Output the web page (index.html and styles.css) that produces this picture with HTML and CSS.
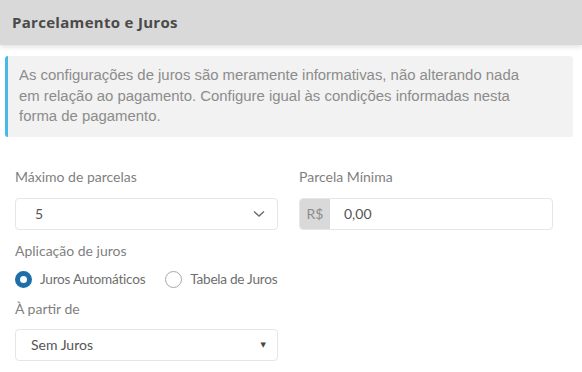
FILE: index.html
```html
<!DOCTYPE html>
<html lang="pt-BR">
<head>
<meta charset="utf-8">
<title>Parcelamento e Juros</title>
<link rel="stylesheet" href="styles.css">
</head>
<body>
<div class="panel-header">
  <h1 class="panel-title">Parcelamento e Juros</h1>
</div>
<div class="alert">
  As configurações de juros são meramente informativas, não alterando nada em relação ao pagamento. Configure igual às condições informadas nesta forma de pagamento.
</div>
<div class="form-grid">
  <div class="field">
    <label class="field-label">Máximo de parcelas</label>
    <div class="select">
      <span class="select-value select-value-indent">5</span>
      <svg class="chevron" width="12" height="8" viewBox="0 0 12 8"><polyline points="1,1.5 6,6 11,1.5" fill="none" stroke="#6b6b6b" stroke-width="1.4"/></svg>
    </div>
  </div>
  <div class="field">
    <label class="field-label">Parcela Mínima</label>
    <div class="input-group">
      <span class="addon">R$</span>
      <span class="input-value">0,00</span>
    </div>
  </div>
  <div class="field field-left">
    <label class="field-label field-label-tight">Aplicação de juros</label>
    <div class="radio-row">
      <span class="radio-item"><span class="radio radio-checked"></span>Juros Automáticos</span>
      <span class="radio-item"><span class="radio"></span>Tabela de Juros</span>
    </div>
    <label class="field-label field-label-tight">À partir de</label>
    <div class="select">
      <span class="select-value">Sem Juros</span>
      <span class="caret">▼</span>
    </div>
  </div>
</div>
</body>
</html>
```
FILE: styles.css
```css
html, body {
  margin: 0;
  padding: 0;
  background: #ffffff;
}
body {
  font-family: Lato, "Liberation Sans", sans-serif;
  color: #777;
  width: 582px;
  height: 372px;
  overflow: hidden;
}
.panel-header {
  height: 45px;
  background: #d9d9d9;
  box-shadow: 0 2px 5px rgba(0, 0, 0, 0.12);
  display: flex;
  align-items: center;
  padding-left: 12px;
  position: relative;
}
.panel-title {
  margin: 0;
  font-family: "Open Sans", "Liberation Sans", sans-serif;
  font-weight: 700;
  font-size: 15px;
  color: #4a4a4a;
  letter-spacing: 0.3px;
  padding-bottom: 2px;
}
.alert {
  margin: 11px 9px 0 5px;
  background: #f2f2f2;
  border-left: 3px solid #4ab8e6;
  border-radius: 3px;
  padding: 9px 40px 10px 11px;
  font-family: "Liberation Sans", Arial, sans-serif;
  font-size: 14.9px;
  line-height: 20.5px;
  color: #8c8c8c;
}
.form-grid {
  display: grid;
  grid-template-columns: 263px 254px;
  column-gap: 21px;
  padding: 31px 29px 0 15px;
}
.field-left {
  grid-column: 1;
}
.field-label {
  display: block;
  font-size: 14px;
  line-height: 18px;
  color: #7f7f7f;
  margin-bottom: 12px;
}
.field-label-tight {
  margin-top: 12px;
  margin-bottom: 0;
}
.select {
  height: 32px;
  box-sizing: border-box;
  border: 1px solid #e6e6e6;
  border-radius: 4px;
  display: flex;
  align-items: center;
  justify-content: space-between;
  padding: 0 10px 0 15px;
  background: #fff;
}
.select-value {
  font-size: 14px;
  color: #555;
}
.select-value-indent {
  padding-left: 4px;
}
.chevron {
  display: block;
  margin-right: 2px;
}
.caret {
  font-size: 7px;
  color: #444;
  font-family: "DejaVu Sans", sans-serif;
  margin-right: 1px;
}
.field-left .select {
  margin-top: 11px;
}
.input-group {
  height: 32px;
  box-sizing: border-box;
  border: 1px solid #e6e6e6;
  border-radius: 4px;
  display: flex;
  align-items: stretch;
  overflow: hidden;
}
.addon {
  width: 30px;
  background: #d9d9d9;
  color: #8c8c8c;
  font-size: 14px;
  display: flex;
  align-items: center;
  justify-content: center;
}
.input-value {
  display: flex;
  align-items: center;
  padding-left: 14px;
  font-size: 14px;
  color: #555;
}
.radio-row {
  display: flex;
  gap: 20px;
  margin-top: 11px;
  margin-bottom: 0;
  white-space: nowrap;
}
.radio-item {
  display: flex;
  align-items: center;
  gap: 8px;
  font-size: 13.6px;
  color: #6f6f6f;
  letter-spacing: -0.25px;
}
.radio {
  width: 17px;
  height: 17px;
  box-sizing: border-box;
  border-radius: 50%;
  border: 1px solid #a8a8a8;
  background: #fff;
  flex: none;
}
.radio-checked {
  border: 5px solid #1d6fa8;
}
```
